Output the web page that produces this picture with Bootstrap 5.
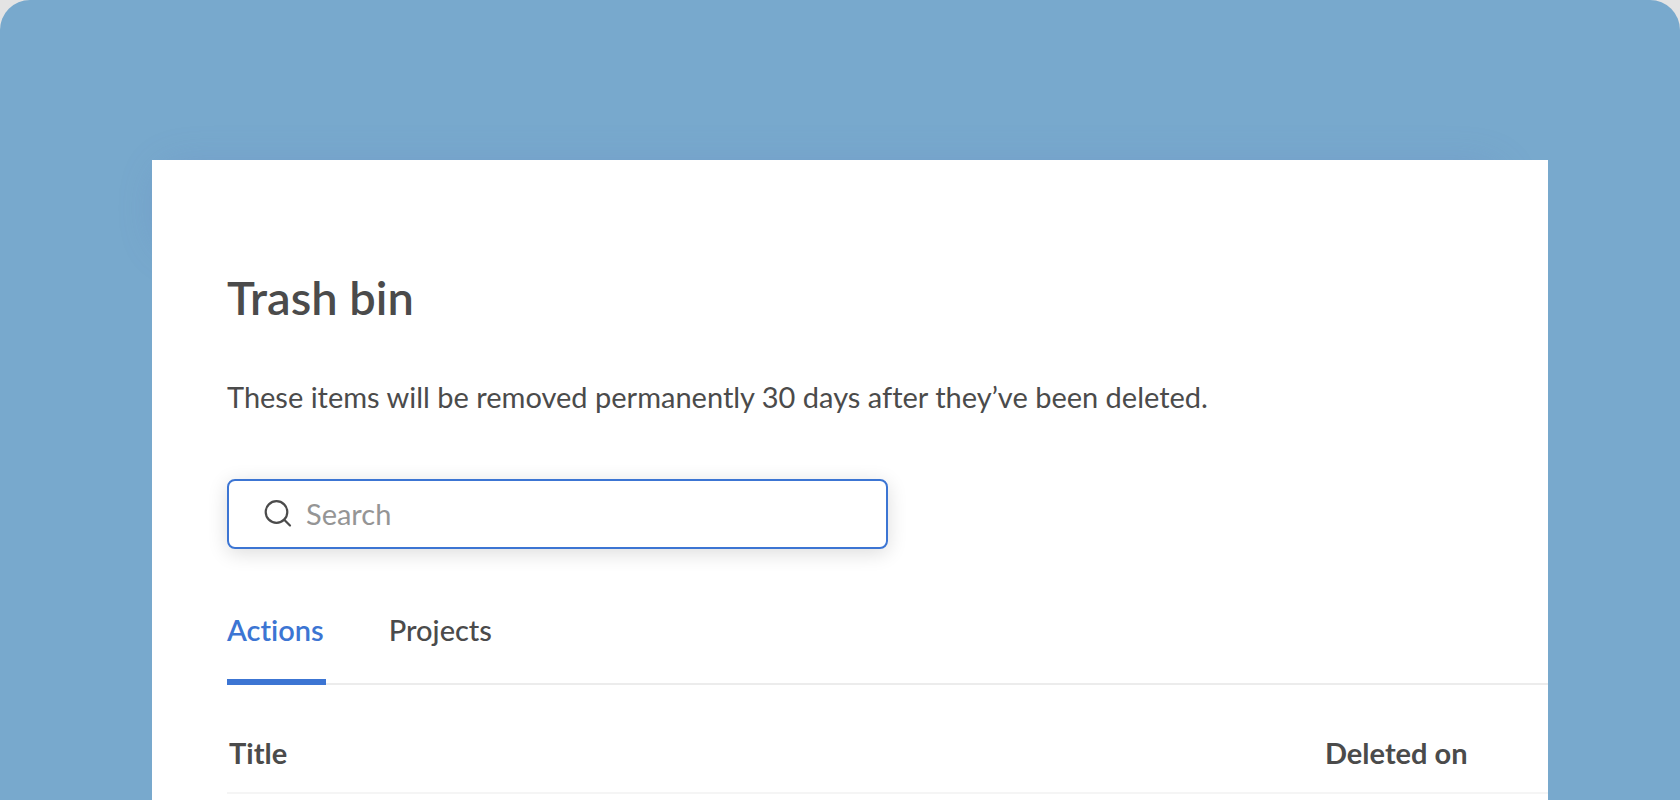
<!DOCTYPE html>
<html lang="en">
<head>
<meta charset="utf-8">
<meta name="viewport" content="width=device-width, initial-scale=1">
<title>Trash bin</title>
<link href="https://cdn.jsdelivr.net/npm/bootstrap@5.3.0/dist/css/bootstrap.min.css" rel="stylesheet">
<style>
  :root { --ink: #4b4b4b; --accent: #3c75d3; }
  body { background: #e4e4e4; color: var(--ink); font-family: Lato, "Open Sans", sans-serif; font-size: 29px; line-height: 40px; font-variant-ligatures: none; }
  .backdrop { background: #78a9cd; border-radius: 30px 30px 0 0; padding: 160px 132px 0 152px; isolation: isolate; }
  .panel { background: #fff; padding: 109px 0 0 75px; }
  /* soft shade behind the top edge of the panel only */
  .panel::before { content: ""; position: absolute; z-index: -1; top: 8px; left: 8px; right: 48px; height: 80px; border-radius: 24px; box-shadow: 0 0 40px rgba(100, 120, 190, .3); }
  .panel-title { font-size: 47px; line-height: 56px; font-weight: 600; margin-bottom: 52px; }
  .intro { margin-bottom: 62px; }
  .search-box { height: 70px; width: 50%; border: 2px solid var(--accent); border-radius: 8px; box-shadow: 0 4px 20px rgba(0, 0, 0, .14); padding: 0 35px; margin-bottom: 61px; }
  .search-box .form-control { font-size: 29px; line-height: 40px; color: var(--ink); padding-left: 14px; }
  .search-box .form-control::placeholder { color: #959595; }
  .tab-bar { box-shadow: inset 0 -2px #ececec; gap: 63px; }
  .tab-bar .nav-link { color: var(--ink); font-weight: 500; padding: 0 2px 29px 0; border-bottom: 6px solid transparent; }
  .tab-bar .nav-link.active { color: var(--accent); font-weight: 600; border-color: var(--accent); }
  .trash-table { color: var(--ink); }
  .trash-table th { padding: 48px 2px 19px; border-bottom: 2px solid #f5f5f5; font-weight: 700; }
  .trash-table .date-col { width: 225px; }
</style>
</head>
<body>
<div class="backdrop min-vh-100 d-flex">
  <main class="panel position-relative flex-grow-1">
    <h1 class="panel-title">Trash bin</h1>
    <p class="intro">These items will be removed permanently 30 days after they’ve been deleted.</p>
    <form class="search-box d-flex align-items-center" role="search">
      <label for="search" class="d-flex" aria-label="Search">
        <svg width="28" height="28" viewBox="0 0 28 28" fill="none" stroke="#4b4b4b" stroke-width="2.2" stroke-linecap="round" aria-hidden="true"><circle cx="12.500" cy="12" r="10.800"/><path d="M20.200 19.700 26 25.500"/></svg>
      </label>
      <input id="search" type="search" class="form-control border-0 shadow-none bg-transparent py-0" placeholder="Search">
    </form>
    <nav class="nav tab-bar" aria-label="Trash contents">
      <a class="nav-link active" aria-current="page" href="#actions">Actions</a>
      <a class="nav-link" href="#projects">Projects</a>
    </nav>
    <table class="table trash-table mb-0">
      <thead><tr><th scope="col">Title</th><th scope="col" class="date-col">Deleted on</th></tr></thead>
    </table>
  </main>
</div>
<script src="https://cdn.jsdelivr.net/npm/bootstrap@5.3.0/dist/js/bootstrap.bundle.min.js"></script>
</body>
</html>
